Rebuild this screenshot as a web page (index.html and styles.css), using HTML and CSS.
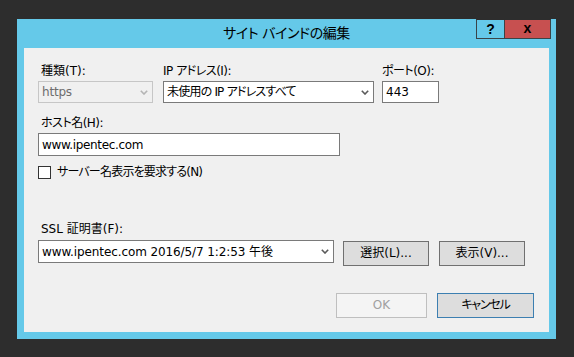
FILE: index.html
```html
<!DOCTYPE html>
<html lang="ja">
<head>
<meta charset="utf-8">
<title>サイト バインドの編集</title>
<link rel="stylesheet" href="styles.css">
</head>
<body>
<div class="dialog">
  <div class="titlebar">
    <div class="title">サイト バインドの編集</div>
    <div class="caption-buttons">
      <div class="cap help">?</div>
      <div class="cap close">x</div>
    </div>
  </div>
  <div class="client">
    <div class="row row-top">
      <div class="field f-type">
        <div class="label indent">種類(T):</div>
        <div class="combo disabled"><span class="val v-https">https</span><svg class="arrow" width="8" height="5" viewBox="0 0 8 5"><path d="M0.8 0.8 L4 4 L7.2 0.8" fill="none" stroke="currentColor" stroke-width="1.6"/></svg></div>
      </div>
      <div class="field f-ip">
        <div class="label k">IP アドレス(I):</div>
        <div class="combo"><span class="val k">未使用の IP アドレスすべて</span><svg class="arrow" width="8" height="5" viewBox="0 0 8 5"><path d="M0.8 0.8 L4 4 L7.2 0.8" fill="none" stroke="currentColor" stroke-width="1.6"/></svg></div>
      </div>
      <div class="field f-port">
        <div class="label k">ポート(O):</div>
        <div class="textbox">443</div>
      </div>
    </div>
    <div class="field f-host">
      <div class="label indent k">ホスト名(H):</div>
      <div class="textbox tall">www.ipentec.com</div>
    </div>
    <div class="check-row">
      <span class="checkbox"></span>
      <span class="check-label">サーバー名表示を要求する(N)</span>
    </div>
    <div class="ssl-label label indent">SSL 証明書(F):</div>
    <div class="row row-ssl">
      <div class="combo cert"><span class="val">www.ipentec.com 2016/5/7 1:2:53 午後</span><svg class="arrow" width="8" height="5" viewBox="0 0 8 5"><path d="M0.8 0.8 L4 4 L7.2 0.8" fill="none" stroke="currentColor" stroke-width="1.6"/></svg></div>
      <div class="btn btn-select">選択(L)...</div>
      <div class="btn btn-view">表示(V)...</div>
    </div>
    <div class="row row-bottom">
      <div class="btn btn-ok disabled">OK</div>
      <div class="btn btn-cancel default">キャンセル</div>
    </div>
  </div>
</div>
</body>
</html>
```

FILE: styles.css
```css
html, body {
  margin: 0;
  padding: 0;
}
body {
  background: #2d2d2d;
  width: 574px;
  height: 357px;
  overflow: hidden;
  font-family: "DejaVu Sans", "Noto Sans CJK JP", sans-serif;
  font-size: 12px;
  font-feature-settings: "palt";
  color: #000;
}
.dialog {
  margin: 19px 0 0 17px;
  width: 539px;
  height: 320px;
  box-sizing: border-box;
  background: #65c9e9;
  padding: 0 7px 7px 7px;
  display: flex;
  flex-direction: column;
}
.titlebar {
  height: 29px;
  margin: 0 -7px;
  display: grid;
  grid-template-columns: 1fr auto 1fr;
  align-items: start;
}
.title {
  grid-column: 2;
  font-size: 14px;
  letter-spacing: -0.4px;
  line-height: 29px;
  height: 29px;
  white-space: nowrap;
  color: #000;
}
.caption-buttons {
  grid-column: 3;
  justify-self: end;
  margin-right: 5px;
  display: flex;
  border: 1px solid #3a4448;
  border-top-color: #2d2d2d;
  height: 18px;
}
.cap {
  height: 18px;
  font-family: "Liberation Sans", sans-serif;
  font-weight: bold;
  font-size: 14px;
  line-height: 18px;
  text-align: center;
  color: #000;
}
.help {
  width: 27px;
  border-right: 1px solid #3a4448;
  background: #65c9e9;
}
.close {
  width: 45px;
  background: #c75050;
  line-height: 16px;
}
.client {
  flex: 1;
  background: #f0f0f0;
  padding: 16px 0 0 14px;
  display: flex;
  flex-direction: column;
  align-items: flex-start;
}
.row {
  display: flex;
  align-items: flex-start;
}
.label {
  height: 15px;
  line-height: 15px;
  margin-bottom: 2px;
  white-space: nowrap;
}
.label.k {
  letter-spacing: -0.5px;
}
.label.indent {
  padding-left: 3px;
}
.f-type { width: 115px; }
.f-ip { width: 211px; margin-left: 10px; }
.f-port { width: 57px; margin-left: 8px; }
.combo, .textbox {
  box-sizing: border-box;
  height: 22px;
  border: 1px solid #7a7a7a;
  background: #fff;
  display: flex;
  align-items: center;
  padding: 0 3px 0 3px;
  white-space: nowrap;
  line-height: 20px;
}
.combo .val {
  flex: 1;
  overflow: hidden;
}
.combo .val.k {
  letter-spacing: -0.8px;
}
.v-https {
  letter-spacing: -0.2px;
}
.combo .arrow {
  color: #5a5a5a;
  margin-right: 1px;
  flex: none;
}
.combo.disabled {
  border-color: #c6c6c6;
  background: #f0f0f0;
  color: #6d6d6d;
}
.combo.disabled .arrow {
  color: #b4b4b4;
}
.f-type .combo, .f-ip .combo, .f-port .textbox {
  width: 100%;
}
.f-host {
  margin-top: 13px;
}
.textbox.tall {
  width: 302px;
  height: 23px;
  letter-spacing: -0.35px;
}
.check-row {
  margin-top: 10px;
  display: flex;
  align-items: center;
  height: 13px;
}
.checkbox {
  box-sizing: border-box;
  width: 13px;
  height: 13px;
  border: 1px solid #333;
  background: #fff;
  margin-right: 6px;
}
.check-label {
  line-height: 15px;
  white-space: nowrap;
  letter-spacing: -0.8px;
}
.ssl-label {
  margin-top: 43px;
  margin-bottom: 3px;
}
.combo.cert {
  width: 296px;
  height: 23px;
  letter-spacing: -0.1px;
}
.btn {
  box-sizing: border-box;
  height: 25px;
  border: 1px solid #707070;
  background: #dddddd;
  display: flex;
  align-items: center;
  justify-content: center;
  line-height: 15px;
  white-space: nowrap;
}
.btn-select {
  width: 86px;
  margin-left: 9px;
  margin-top: 1px;
}
.btn-view {
  width: 86px;
  margin-left: 10px;
  margin-top: 1px;
}
.row-bottom {
  align-self: stretch;
  justify-content: flex-end;
  margin-top: 27px;
  padding-right: 15px;
}
.btn-ok {
  width: 91px;
}
.btn.disabled {
  background: #f4f4f4;
  border-color: #bfbfbf;
  color: #a0a0a0;
}
.btn-cancel {
  width: 97px;
  margin-left: 10px;
  letter-spacing: -1.2px;
}
.btn.default {
  border-color: #3c7fb1;
}
```
